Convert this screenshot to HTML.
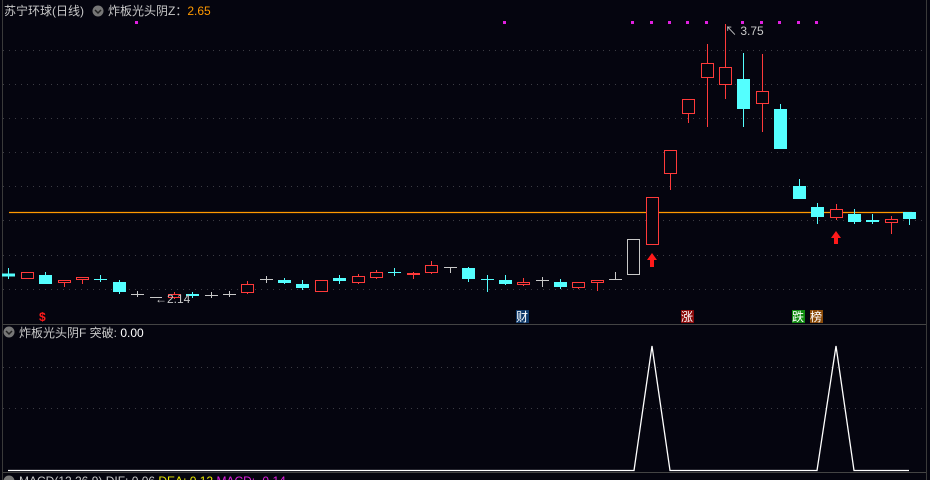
<!DOCTYPE html>
<html><head><meta charset="utf-8"><style>
html,body{margin:0;padding:0;background:#05050f;width:930px;height:480px;overflow:hidden}
svg{display:block}
text{font-family:"Liberation Sans","Noto Sans CJK SC",sans-serif;font-size:12px}
</style></head><body>
<svg width="930" height="480" viewBox="0 0 930 480" xmlns="http://www.w3.org/2000/svg">
<rect width="930" height="480" fill="#05050f"/>
<line x1="2.5" y1="0" x2="2.5" y2="480" stroke="#3a3a3a"/>
<line x1="926.5" y1="0" x2="926.5" y2="480" stroke="#3a3a3a"/>
<g stroke="#3c3c44" stroke-dasharray="1 5">
<line x1="3" y1="50.5" x2="926" y2="50.5"/><line x1="3" y1="84.5" x2="926" y2="84.5"/>
<line x1="3" y1="118.5" x2="926" y2="118.5"/><line x1="3" y1="152.5" x2="926" y2="152.5"/>
<line x1="3" y1="186.5" x2="926" y2="186.5"/><line x1="3" y1="220.5" x2="926" y2="220.5"/>
<line x1="3" y1="255.5" x2="926" y2="255.5"/><line x1="3" y1="289.5" x2="926" y2="289.5"/>
<line x1="3" y1="408.5" x2="926" y2="408.5"/><line x1="3" y1="367.5" x2="926" y2="367.5"/>
</g>
<line x1="3" y1="324.5" x2="926" y2="324.5" stroke="#444"/>
<line x1="3" y1="472.5" x2="926" y2="472.5" stroke="#444"/>
<line x1="9" y1="212.5" x2="912" y2="212.5" stroke="#ff9900" stroke-width="1.2"/>
<g fill="#e020e0">
<rect x="135" y="21" width="3" height="3"/><rect x="503" y="21" width="3" height="3"/>
<rect x="631" y="21" width="3" height="3"/><rect x="650" y="21" width="3" height="3"/>
<rect x="668" y="21" width="3" height="3"/><rect x="686" y="21" width="3" height="3"/>
<rect x="705" y="21" width="3" height="3"/><rect x="741" y="21" width="3" height="3"/>
<rect x="760" y="21" width="3" height="3"/><rect x="778" y="21" width="3" height="3"/>
<rect x="797" y="21" width="3" height="3"/><rect x="815" y="21" width="3" height="3"/>
</g>
<!-- cyan candles -->
<g stroke="#54ffff" fill="#54ffff">
<line x1="8.5" y1="268" x2="8.5" y2="279"/><rect x="2.5" y="274" width="12" height="2"/>
<line x1="45.5" y1="272" x2="45.5" y2="284"/><rect x="39.5" y="275.5" width="12" height="8"/>
<line x1="100.5" y1="275" x2="100.5" y2="282"/><line x1="94" y1="279.5" x2="107" y2="279.5"/>
<line x1="119.5" y1="280" x2="119.5" y2="294"/><rect x="113.5" y="282.5" width="12" height="9"/>
<line x1="192.5" y1="292" x2="192.5" y2="298"/><rect x="186.5" y="294.5" width="12" height="1"/>
<line x1="284.5" y1="278" x2="284.5" y2="284"/><rect x="278.5" y="280.5" width="12" height="2"/>
<line x1="302.5" y1="280" x2="302.5" y2="290"/><rect x="296.5" y="284.5" width="12" height="3"/>
<line x1="339.5" y1="275" x2="339.5" y2="284"/><rect x="333.5" y="278.5" width="12" height="2"/>
<line x1="394.5" y1="268" x2="394.5" y2="276"/><line x1="388" y1="272.5" x2="401" y2="272.5"/>
<line x1="468.5" y1="267" x2="468.5" y2="282"/><rect x="462.5" y="268.5" width="12" height="10"/>
<line x1="487.5" y1="275" x2="487.5" y2="292"/><line x1="481" y1="279.5" x2="494" y2="279.5"/>
<line x1="505.5" y1="275" x2="505.5" y2="285"/><rect x="499.5" y="280.5" width="12" height="3"/>
<line x1="560.5" y1="279" x2="560.5" y2="289"/><rect x="554.5" y="282.5" width="12" height="4"/>
<line x1="743.5" y1="53" x2="743.5" y2="127"/><rect x="737.5" y="79.5" width="12" height="29"/>
<line x1="780.5" y1="104" x2="780.5" y2="110"/><rect x="774.5" y="109.5" width="12" height="39"/>
<line x1="799.5" y1="179" x2="799.5" y2="187"/><rect x="793.5" y="186.5" width="12" height="12"/>
<line x1="817.5" y1="203" x2="817.5" y2="224"/><rect x="811.5" y="207.5" width="12" height="9"/>
<line x1="854.5" y1="209" x2="854.5" y2="224"/><rect x="848.5" y="214.5" width="12" height="7"/>
<line x1="872.5" y1="214" x2="872.5" y2="224"/><rect x="866.5" y="220.5" width="12" height="1"/>
<line x1="909.5" y1="212" x2="909.5" y2="225"/><rect x="903.5" y="212.5" width="12" height="6"/>
</g>
<!-- red candles -->
<g stroke="#ff3a3a" fill="#05050f">
<rect x="21.5" y="272.5" width="12" height="6"/>
<line x1="64.5" y1="280" x2="64.5" y2="287"/><rect x="58.5" y="280.5" width="12" height="2"/>
<line x1="82.5" y1="277" x2="82.5" y2="284"/><rect x="76.5" y="277.5" width="12" height="2"/>
<line x1="174.5" y1="292" x2="174.5" y2="299"/><rect x="168.5" y="294.5" width="12" height="3"/>
<line x1="247.5" y1="281" x2="247.5" y2="294"/><rect x="241.5" y="284.5" width="12" height="8"/>
<rect x="315.5" y="280.5" width="12" height="11"/>
<line x1="358.5" y1="274" x2="358.5" y2="284"/><rect x="352.5" y="276.5" width="12" height="6"/>
<line x1="376.5" y1="270" x2="376.5" y2="279"/><rect x="370.5" y="272.5" width="12" height="5"/>
<line x1="413.5" y1="272" x2="413.5" y2="279"/><rect x="407.5" y="273.5" width="12" height="1"/>
<line x1="431.5" y1="261" x2="431.5" y2="274"/><rect x="425.5" y="265.5" width="12" height="7"/>
<line x1="523.5" y1="278" x2="523.5" y2="286"/><rect x="517.5" y="282.5" width="12" height="2"/>
<line x1="578.5" y1="282" x2="578.5" y2="289"/><rect x="572.5" y="282.5" width="12" height="5"/>
<line x1="597.5" y1="281" x2="597.5" y2="291"/><rect x="591.5" y="280.5" width="12" height="2"/>
<rect x="646.5" y="197.5" width="12" height="47"/>
<line x1="670.5" y1="173" x2="670.5" y2="190"/><rect x="664.5" y="150.5" width="12" height="23"/>
<line x1="688.5" y1="113" x2="688.5" y2="123"/><rect x="682.5" y="99.5" width="12" height="14"/>
<line x1="707.5" y1="44" x2="707.5" y2="127"/><rect x="701.5" y="63.5" width="12" height="14"/>
<line x1="725.5" y1="24" x2="725.5" y2="99"/><rect x="719.5" y="67.5" width="12" height="17"/>
<line x1="762.5" y1="54" x2="762.5" y2="132"/><rect x="756.5" y="91.5" width="12" height="12"/>
<line x1="836.5" y1="204" x2="836.5" y2="220"/><rect x="830.5" y="209.5" width="12" height="8"/>
<line x1="891.5" y1="216" x2="891.5" y2="234"/><rect x="885.5" y="219.5" width="12" height="3"/>
</g>
<!-- grey -->
<g stroke="#c8c8c8" fill="#05050f">
<line x1="137.5" y1="291" x2="137.5" y2="297"/><line x1="131" y1="294.5" x2="144" y2="294.5"/>
<line x1="150" y1="297.5" x2="162" y2="297.5"/>
<line x1="211.5" y1="292" x2="211.5" y2="298"/><line x1="205" y1="295.5" x2="218" y2="295.5"/>
<line x1="229.5" y1="291" x2="229.5" y2="297"/><line x1="223" y1="294.5" x2="236" y2="294.5"/>
<line x1="266.5" y1="276" x2="266.5" y2="283"/><line x1="260" y1="279.5" x2="273" y2="279.5"/>
<line x1="450.5" y1="268" x2="450.5" y2="273"/><line x1="444" y1="267.5" x2="457" y2="267.5"/>
<line x1="542.5" y1="277" x2="542.5" y2="287"/><line x1="536" y1="280.5" x2="549" y2="280.5"/>
<line x1="615.5" y1="272" x2="615.5" y2="279"/><line x1="609" y1="279.5" x2="622" y2="279.5"/>
<rect x="627.5" y="239.5" width="12" height="35"/>
</g>
<!-- labels -->
<text x="155" y="303" fill="#c8c8c8" font-size="12">←2.14</text>
<text x="725" y="35" fill="#c8c8c8" font-size="12">↖ 3.75</text>
<!-- red arrows -->
<g fill="#ff1a1a">
<polygon points="652,253 647,260 650,260 650,267 654,267 654,260 657,260"/>
<polygon points="836,231 831,238 834,238 834,244 838,244 838,238 841,238"/>
</g>
<text x="39" y="321" fill="#ff1a1a" font-size="11" font-weight="bold">$</text>
<rect x="516" y="310" width="13" height="13" fill="#103a6a"/><text x="516" y="321" fill="#fff" font-size="12">财</text>
<rect x="681" y="310" width="13" height="13" fill="#8a0a0a"/><text x="681" y="321" fill="#fff" font-size="12">涨</text>
<rect x="792" y="310" width="13" height="13" fill="#108a10"/><text x="792" y="321" fill="#fff" font-size="12">跌</text>
<rect x="810" y="310" width="13" height="13" fill="#8a4a08"/><text x="810" y="321" fill="#fff" font-size="12">榜</text>
<!-- header -->
<text x="4" y="15" fill="#c8c8c8" font-size="12">苏宁环球(日线)</text>
<circle cx="98" cy="11" r="5.5" fill="#777"/><path d="M95 10l3 3 3-3" stroke="#222" fill="none" stroke-width="1.5"/>
<text x="108" y="15" fill="#c8c8c8" font-size="12">炸板光头阴Z：<tspan fill="#ff9900">2.65</tspan></text>
<circle cx="9" cy="332" r="5.5" fill="#777"/><path d="M6 331l3 3 3-3" stroke="#222" fill="none" stroke-width="1.5"/>
<text x="19" y="337" fill="#c8c8c8" font-size="12">炸板光头阴F 突破: <tspan fill="#fff">0.00</tspan></text>
<!-- bottom indicator -->
<polyline points="8,470.5 634,470.5 652,346 670,470.5 817,470.5 836,346 854,470.5 909,470.5" stroke="#fff" fill="none" stroke-width="1.3"/>
<circle cx="9" cy="481" r="5.5" fill="#777"/>
<text x="19" y="485" fill="#c8c8c8" font-size="12">MACD(12,26,9) DIF: 0.06 <tspan fill="#e8e800">DEA: 0.12</tspan> <tspan fill="#e020e0">MACD: -0.14</tspan></text>
</svg>
</body></html>
